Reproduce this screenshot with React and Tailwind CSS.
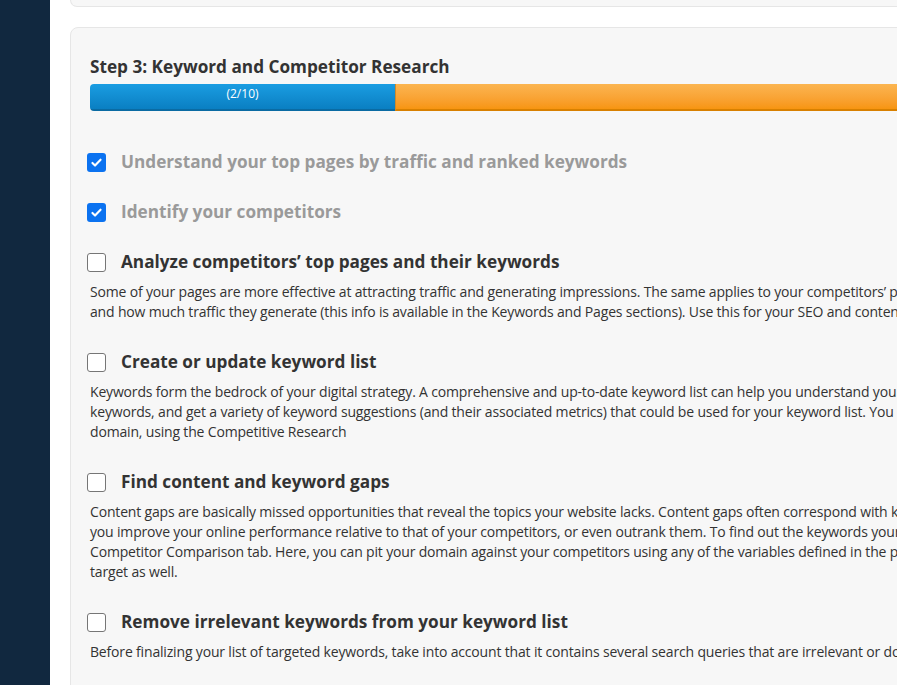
import React from 'react';

const font = { fontFamily: '"Open Sans", "Noto Sans", sans-serif' };

const tasks = [
  { title: 'Understand your top pages by traffic and ranked keywords', done: true },
  { title: 'Identify your competitors', done: true },
  {
    title: 'Analyze competitors’ top pages and their keywords',
    lines: [
      'Some of your pages are more effective at attracting traffic and generating impressions. The same applies to your competitors’ pages. Find out which of their pages perform best',
      'and how much traffic they generate (this info is available in the Keywords and Pages sections). Use this for your SEO and content strategy.',
    ],
  },
  {
    title: 'Create or update keyword list',
    lines: [
      'Keywords form the bedrock of your digital strategy. A comprehensive and up-to-date keyword list can help you understand your audience, find new ranking',
      'keywords, and get a variety of keyword suggestions (and their associated metrics) that could be used for your keyword list. You can also see the keywords of any',
      'domain, using the Competitive Research',
    ],
  },
  {
    title: 'Find content and keyword gaps',
    lines: [
      'Content gaps are basically missed opportunities that reveal the topics your website lacks. Content gaps often correspond with keyword gaps. Filling them can help',
      'you improve your online performance relative to that of your competitors, or even outrank them. To find out the keywords your competitors rank for, go to the',
      'Competitor Comparison tab. Here, you can pit your domain against your competitors using any of the variables defined in the panel and find the keywords to',
      'target as well.',
    ],
  },
  {
    title: 'Remove irrelevant keywords from your keyword list',
    lines: [
      'Before finalizing your list of targeted keywords, take into account that it contains several search queries that are irrelevant or do not match your business.',
    ],
  },
];

function Checkbox({ checked }) {
  if (checked) {
    return (
      <span className="flex h-[19px] w-[19px] shrink-0 items-center justify-center rounded-[3px] bg-[#0b72f0]">
        <svg width="13" height="13" viewBox="0 0 16 16" fill="none">
          <path d="M3 8.5l3.2 3.2L13 4.5" stroke="white" strokeWidth="2.6" strokeLinecap="round" strokeLinejoin="round" />
        </svg>
      </span>
    );
  }
  return <span className="h-[19px] w-[19px] shrink-0 rounded-[3px] border border-[#767676] bg-white" />;
}

export default function App() {
  return (
    <div className="flex h-[685px] w-[897px] overflow-hidden bg-white" style={font}>
      <aside className="w-[50px] shrink-0 bg-[#11283f]" />

      <main className="min-w-0 flex-1 overflow-hidden pl-5">
        <div className="h-[7px] w-[1500px] rounded-b-lg border border-t-0 border-[#e6e6e6] bg-[#f7f7f7]" />

        <section className="mt-5 w-[1500px] rounded-lg border border-[#e6e6e6] bg-[#f7f7f7] px-[19px] pt-[27px] pb-10">
          <h2 className="text-[17.2px] font-bold leading-6 text-[#333]">Step 3: Keyword and Competitor Research</h2>

          <div className="mt-[5px] flex h-[27px] w-[1525px] overflow-hidden rounded-[4px]">
            <div className="w-[305px] border-b-2 border-[#0a6ba3] bg-gradient-to-b from-[#1a9de2] to-[#0a7fc2] pt-[2px] text-center text-xs leading-4 text-white">
              (2/10)
            </div>
            <div className="flex-1 border-b-2 border-l border-[#d88000] border-l-[#cf8a2a] bg-gradient-to-b from-[#fbb550] to-[#f7950f]" />
          </div>

          <ul className="mt-[41px] flex flex-col gap-[30px]">
            {tasks.map(t => (
              <li key={t.title}>
                <label className="-ml-[3px] flex items-center gap-[15px]">
                  <Checkbox checked={t.done} />
                  <span className={`text-[17.2px] font-bold leading-5 ${t.done ? 'text-[#9a9a9a]' : 'text-[#333]'}`}>{t.title}</span>
                </label>
                <p className={`mt-[10px] text-[14px] leading-5 tracking-[-0.17px] whitespace-nowrap text-[#333] ${t.lines ? '' : 'hidden'}`}>
                  {(t.lines || []).map((l, i) => (
                    <React.Fragment key={i}>{l}{i < t.lines.length - 1 && <br />}</React.Fragment>
                  ))}
                </p>
              </li>
            ))}
          </ul>
        </section>
      </main>
    </div>
  );
}
